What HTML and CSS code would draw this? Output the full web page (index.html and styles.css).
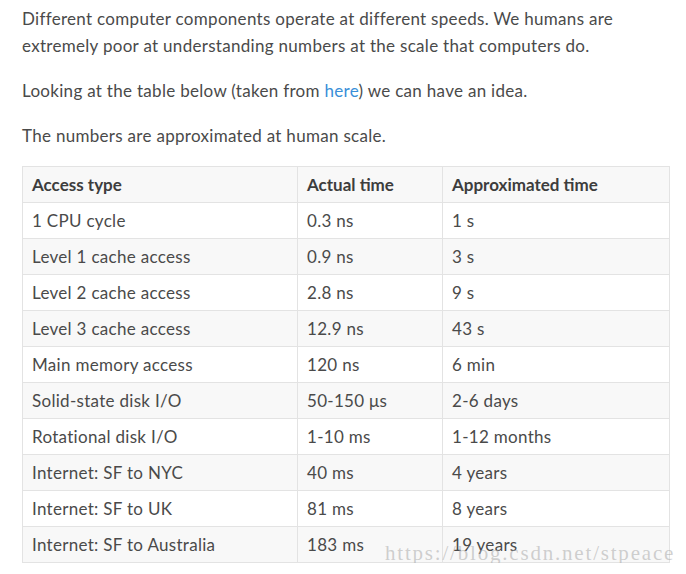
FILE: index.html
```html
<!DOCTYPE html>
<html>
<head>
<meta charset="utf-8">
<link rel="stylesheet" href="styles.css">
</head>
<body>
<div class="post">
  <p>Different computer components operate at different speeds. We humans are extremely poor at understanding numbers at the scale that computers do.</p>
  <p>Looking at the table below (taken from <a href="#">here</a>) we can have an idea.</p>
  <p class="last">The numbers are approximated at human scale.</p>
  <table class="speed">
    <thead>
      <tr><th class="c1">Access type</th><th class="c2">Actual time</th><th>Approximated time</th></tr>
    </thead>
    <tbody>
      <tr><td>1 CPU cycle</td><td>0.3 ns</td><td>1 s</td></tr>
      <tr><td>Level 1 cache access</td><td>0.9 ns</td><td>3 s</td></tr>
      <tr><td>Level 2 cache access</td><td>2.8 ns</td><td>9 s</td></tr>
      <tr><td>Level 3 cache access</td><td>12.9 ns</td><td>43 s</td></tr>
      <tr><td>Main memory access</td><td>120 ns</td><td>6 min</td></tr>
      <tr><td>Solid-state disk I/O</td><td>50-150 μs</td><td>2-6 days</td></tr>
      <tr><td>Rotational disk I/O</td><td>1-10 ms</td><td>1-12 months</td></tr>
      <tr><td>Internet: SF to NYC</td><td>40 ms</td><td>4 years</td></tr>
      <tr><td>Internet: SF to UK</td><td>81 ms</td><td>8 years</td></tr>
      <tr><td>Internet: SF to Australia</td><td>183 ms</td><td>19 years</td></tr>
    </tbody>
  </table>
  <div class="watermark">https://blog.csdn.net/stpeace</div>
</div>
</body>
</html>
```
FILE: styles.css
```css
html, body {
  margin: 0;
  padding: 0;
  background: #fff;
}
.post {
  position: relative;
  width: 648px;
  padding: 5px 0 0 22px;
  font-family: Lato, "Open Sans", sans-serif;
  font-size: 17px;
  letter-spacing: 0.3px;
  line-height: 27px;
  color: #4a4a4a;
}
.post p {
  margin: 0 0 18px 0;
}
.post p.last {
  margin-bottom: 17px;
}
.post a {
  color: #3a8fd8;
  text-decoration: none;
}
.speed {
  width: 648px;
  border-collapse: collapse;
  border: 1px solid #e3e3e3;
}
.speed th, .speed td {
  border: 1px solid #e3e3e3;
  padding: 0 9px;
  height: 35px;
  text-align: left;
  line-height: 20px;
}
.speed th {
  font-weight: bold;
  color: #3d3d3d;
  background: #f8f8f8;
  letter-spacing: 0;
}
.speed .c1 { width: 256px; }
.speed .c2 { width: 126px; }
.speed tbody tr:nth-child(even) td {
  background: #f8f8f8;
}
.watermark {
  position: absolute;
  left: 385px;
  top: 540px;
  font-family: "Liberation Serif", serif;
  font-size: 21px;
  letter-spacing: 1.8px;
  color: rgba(170, 170, 170, 0.55);
  white-space: nowrap;
}
```
